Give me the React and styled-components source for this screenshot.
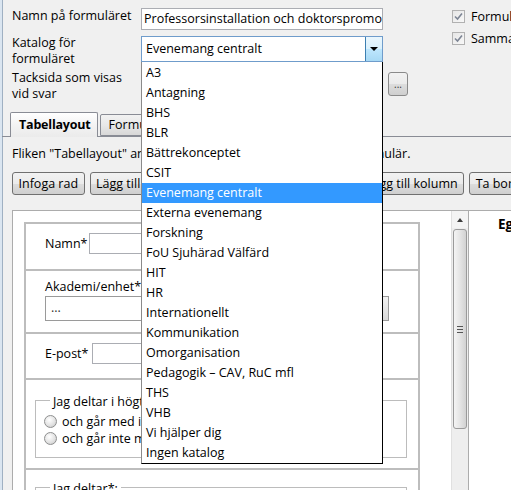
import styled, { createGlobalStyle } from "styled-components";

const GlobalStyle = createGlobalStyle`
  html, body {
    margin: 0;
    padding: 0;
    background: #f0f0f0;
  }
  body {
    font-family: "Open Sans", "Noto Sans", sans-serif;
    font-size: 12.5px;
    color: #000;
  }
`;

const Page = styled.div`
  position: relative;
  width: 511px;
  height: 490px;
  overflow: hidden;
  box-sizing: border-box;
  border-left: 2px solid #dae5f0;
  box-shadow: inset 1px 0 0 #9fb0c2;
  background: #f0f0f0;
`;

const Header = styled.div`
  display: flex;
  box-sizing: border-box;
  height: 102px;
  padding: 8px 0 0 10px;
`;

const FormGrid = styled.div`
  display: grid;
  grid-template-columns: 129px 242px 25px;
  grid-template-rows: 27px 35px 32px;
  align-items: start;
`;

const Label = styled.div`
  line-height: 16px;
`;

const TextInput = styled.div`
  box-sizing: border-box;
  width: 242px;
  height: 22px;
  margin-top: ${(p) => p.$mt || 0}px;
  border: 1px solid #abadb3;
  background: #fff;
  padding: 0 2px;
  line-height: 20px;
  white-space: nowrap;
  overflow: hidden;
`;

const SelectWrap = styled.div`
  position: relative;
  display: flex;
  box-sizing: border-box;
  width: 242px;
  height: 26px;
  margin-top: 1px;
  border: 1px solid #6f9ccb;
  background: #fff;
`;

const SelectValue = styled.div`
  flex: 1;
  padding-left: 4px;
  line-height: 24px;
  white-space: nowrap;
`;

const SelectButton = styled.div`
  width: 16px;
  display: flex;
  align-items: center;
  justify-content: center;
  border-left: 1px solid #3c7fb1;
  background: linear-gradient(#eaf6fd, #d9f0fc 50%, #bee6fd 51%, #a7d9f5);
  &::after {
    content: "";
    border-left: 4px solid transparent;
    border-right: 4px solid transparent;
    border-top: 4px solid #000;
  }
`;

const DropList = styled.div`
  position: absolute;
  z-index: 10;
  top: calc(100% + 1px);
  left: -1px;
  box-sizing: border-box;
  width: 242px;
  padding-top: 1px;
  background: #fff;
  border: 1px solid #000;
  border-top: none;
  border-left-color: #8a8a8a;
`;

const DropItem = styled.div`
  height: 20px;
  line-height: 20px;
  padding-left: 4px;
  white-space: nowrap;
  background: ${(p) => (p.$selected ? "#3399ff" : "transparent")};
  color: ${(p) => (p.$selected ? "#fff" : "#000")};
`;

const DotsButton = styled.div`
  box-sizing: border-box;
  width: 20px;
  height: 24px;
  margin: 2px 0 0 5px;
  border: 1px solid #8a8a8a;
  border-radius: 3px;
  background: linear-gradient(#f2f2f2, #ebebeb 50%, #dddddd 51%, #cfcfcf);
  text-align: center;
  line-height: 22px;
  font-size: 10px;
  color: #333;
`;

const CheckCol = styled.div`
  margin-left: 44px;
  padding-top: 1px;
`;

const CheckRow = styled.div`
  display: flex;
  align-items: center;
  gap: 6px;
  height: 14px;
  margin-bottom: 8px;
  white-space: nowrap;
`;

const CheckBox = styled.span`
  box-sizing: border-box;
  width: 13px;
  height: 13px;
  flex: none;
  border: 1px solid #b1b1b1;
  background: linear-gradient(135deg, #e6e6e6, #f8f8f8);
  display: flex;
  align-items: center;
  justify-content: center;
`;

const TabBar = styled.div`
  display: flex;
  align-items: flex-end;
  height: 24px;
  margin-top: 10px;
  padding-left: 8px;
  border-bottom: 1px solid #898c95;
`;

const Tab = styled.div`
  position: relative;
  box-sizing: border-box;
  height: ${(p) => (p.$active ? "25px" : "22px")};
  margin-bottom: ${(p) => (p.$active ? "-1px" : "0")};
  margin-left: ${(p) => (p.$active ? "0" : "2px")};
  padding: ${(p) => (p.$active ? "0 6px 0 8px" : "0 8px")};
  border: 1px solid #898c95;
  border-bottom: ${(p) => (p.$active ? "none" : "1px solid #898c95")};
  border-radius: 2px 2px 0 0;
  background: ${(p) =>
    p.$active
      ? "linear-gradient(#ffffff, #f3f3f3 50%, #ebebeb)"
      : "linear-gradient(#f2f2f2, #e8e8e8 50%, #d8d8d8)"};
  font-weight: ${(p) => (p.$active ? 700 : 400)};
  letter-spacing: ${(p) => (p.$active ? "-0.2px" : "0")};
  line-height: ${(p) => (p.$active ? "23px" : "20px")};
  white-space: nowrap;
`;

const Description = styled.div`
  margin-top: 9px;
  padding-left: 10px;
  line-height: 16px;
  white-space: nowrap;
`;

const ButtonRow = styled.div`
  display: flex;
  gap: 5px;
  margin-top: 10px;
  padding-left: 10px;
  white-space: nowrap;
`;

const Button = styled.div`
  flex: none;
  box-sizing: border-box;
  height: 23px;
  padding: 0 5.5px;
  border: 1px solid #707070;
  border-radius: 3px;
  background: linear-gradient(#f2f2f2, #ebebeb 50%, #dddddd 51%, #cfcfcf);
  line-height: 21px;
`;

const Panel = styled.div`
  display: flex;
  height: 280px;
  margin: 15px 0 0 10px;
  border-top: 1px solid #acacac;
  border-left: 1px solid #acacac;
  background: #fff;
`;

const ScrollArea = styled.div`
  flex: 1;
  padding: 11px 0 0 11px;
  overflow: hidden;
`;

const Row = styled.div`
  box-sizing: border-box;
  height: ${(p) => p.$h}px;
  padding: ${(p) => p.$pt}px 0 0 ${(p) => p.$pl ?? 19}px;
`;

const Table = styled.div`
  box-sizing: border-box;
  width: 396px;
  border: 2px solid #bdbdbd;
  & > ${Row} + ${Row} {
    border-top: 2px solid #bdbdbd;
  }
`;

const InlineField = styled.div`
  display: flex;
  align-items: center;
  gap: ${(p) => p.$gap}px;
`;

const FieldInput = styled.div`
  box-sizing: border-box;
  width: 160px;
  height: 21px;
  border: 1px solid #abadb3;
  background: #fff;
`;

const FieldSelect = styled.div`
  display: flex;
  box-sizing: border-box;
  width: 344px;
  height: 25px;
  margin-top: 1px;
  border: 1px solid #9a9a9a;
  background: #fff;
`;

const FieldSelectValue = styled.div`
  flex: 1;
  padding-left: 5px;
  line-height: 22px;
  color: #333;
`;

const FieldSelectArrow = styled.div`
  width: 6px;
  border-left: 1px solid #8a8a8a;
  background: linear-gradient(#f2f2f2, #d8d8d8);
`;

const GroupBox = styled.div`
  margin-right: 11px;
  padding: 0 0 11px 8px;
  border: 1px solid #bcbcbc;
`;

const GroupLegend = styled.div`
  display: table;
  margin: -7px 0 0 6px;
  padding: 0 3px;
  line-height: 16px;
  background: #fff;
  white-space: nowrap;
`;

const RadioRow = styled.div`
  display: flex;
  align-items: center;
  gap: 5px;
  height: 16px;
  margin-top: ${(p) => p.$mt || 0}px;
  white-space: nowrap;
`;

const Radio = styled.span`
  box-sizing: border-box;
  width: 13px;
  height: 13px;
  flex: none;
  border: 1px solid #8e8f8f;
  border-radius: 50%;
  background: radial-gradient(circle at 40% 35%, #ffffff, #e3e3e3 55%, #c4c4c4);
`;

const Scrollbar = styled.div`
  display: flex;
  flex-direction: column;
  width: 16px;
  border-left: 1px solid #e0e0e0;
  background: #eeeeee;
`;

const ScrollUp = styled.div`
  height: 17px;
  display: flex;
  align-items: center;
  justify-content: center;
  background: #f4f4f4;
  &::after {
    content: "";
    border-left: 3.5px solid transparent;
    border-right: 3.5px solid transparent;
    border-bottom: 4px solid #3d3d3d;
  }
`;

const Thumb = styled.div`
  box-sizing: border-box;
  height: 200px;
  margin: 1px 1px 0;
  border: 1px solid #9a9a9a;
  border-radius: 3px;
  background: linear-gradient(to right, #f4f4f4, #e6e6e6 45%, #d2d2d2);
  display: flex;
  align-items: center;
  justify-content: center;
`;

const Grip = styled.div`
  width: 6px;
  height: 7px;
  background: repeating-linear-gradient(#555 0 1px, transparent 1px 3px);
`;

const RightPane = styled.div`
  width: 43px;
  flex: none;
  box-sizing: border-box;
  border-left: 1px solid #acacac;
  padding: 4px 0 0 29px;
  background: #fff;
  overflow: hidden;
`;

const PaneTitle = styled.div`
  font-weight: 700;
  font-size: 13.5px;
  line-height: 18px;
  white-space: nowrap;
`;

const catalogs = [
  "A3",
  "Antagning",
  "BHS",
  "BLR",
  "Bättrekonceptet",
  "CSIT",
  "Evenemang centralt",
  "Externa evenemang",
  "Forskning",
  "FoU Sjuhärad Välfärd",
  "HIT",
  "HR",
  "Internationellt",
  "Kommunikation",
  "Omorganisation",
  "Pedagogik – CAV, RuC mfl",
  "THS",
  "VHB",
  "Vi hjälper dig",
  "Ingen katalog",
];

const toolbar = [
  "Infoga rad",
  "Lägg till rad",
  "Ta bort rad",
  "Infoga kolumn",
  "Lägg till kolumn",
  "Ta bort kolumn",
];

function Check() {
  return (
    <svg width="9" height="9" viewBox="0 0 9 9">
      <path
        d="M1 4.5 L3.5 7 L8 1.5"
        fill="none"
        stroke="#7d8594"
        strokeWidth="1.6"
      />
    </svg>
  );
}

export default function App() {
  const selected = "Evenemang centralt";

  return (
    <>
      <GlobalStyle />
      <Page>
        <Header>
          <FormGrid>
            <Label>Namn på formuläret</Label>
            <TextInput>Professorsinstallation och doktorspromotion 2013</TextInput>
            <div />

            <Label>
              Katalog för
              <br />
              formuläret
            </Label>
            <SelectWrap>
              <SelectValue>{selected}</SelectValue>
              <SelectButton />
              <DropList>
                {catalogs.map((c) => (
                  <DropItem key={c} $selected={c === selected}>
                    {c}
                  </DropItem>
                ))}
              </DropList>
            </SelectWrap>
            <div />

            <Label>
              Tacksida som visas
              <br />
              vid svar
            </Label>
            <TextInput $mt={2} />
            <DotsButton>...</DotsButton>
          </FormGrid>

          <CheckCol>
            <CheckRow>
              <CheckBox>
                <Check />
              </CheckBox>
              Formulär aktivt
            </CheckRow>
            <CheckRow>
              <CheckBox>
                <Check />
              </CheckBox>
              Sammanställning
            </CheckRow>
          </CheckCol>
        </Header>

        <TabBar>
          <Tab $active>Tabellayout</Tab>
          <Tab>Formulärinställningar</Tab>
        </TabBar>

        <Description>
          Fliken "Tabellayout" används för att bygga upp layouten av formulär.
        </Description>

        <ButtonRow>
          {toolbar.map((t) => (
            <Button key={t}>{t}</Button>
          ))}
        </ButtonRow>

        <Panel>
          <ScrollArea>
            <Table>
              <Row $h={45} $pt={9}>
                <InlineField $gap={2}>
                  Namn*
                  <FieldInput />
                </InlineField>
              </Row>
              <Row $h={63} $pt={8}>
                <Label>Akademi/enhet*</Label>
                <FieldSelect>
                  <FieldSelectValue>...</FieldSelectValue>
                  <FieldSelectArrow />
                </FieldSelect>
              </Row>
              <Row $h={46} $pt={9}>
                <InlineField $gap={4}>
                  E-post*
                  <FieldInput />
                </InlineField>
              </Row>
              <Row $h={90} $pt={20} $pl={9}>
                <GroupBox>
                  <GroupLegend>Jag deltar i högtidligheterna</GroupLegend>
                  <RadioRow $mt={3}>
                    <Radio />
                    och går med i processionen
                  </RadioRow>
                  <RadioRow $mt={1}>
                    <Radio />
                    och går inte med i processionen
                  </RadioRow>
                </GroupBox>
              </Row>
              <Row $h={70} $pt={17} $pl={9}>
                <GroupBox>
                  <GroupLegend>Jag deltar*:</GroupLegend>
                  <RadioRow $mt={3}>
                    <Radio />
                    på ceremonin
                  </RadioRow>
                </GroupBox>
              </Row>
            </Table>
          </ScrollArea>
          <Scrollbar>
            <ScrollUp />
            <Thumb>
              <Grip />
            </Thumb>
          </Scrollbar>
          <RightPane>
            <PaneTitle>Egenskaper</PaneTitle>
          </RightPane>
        </Panel>
      </Page>
    </>
  );
}
